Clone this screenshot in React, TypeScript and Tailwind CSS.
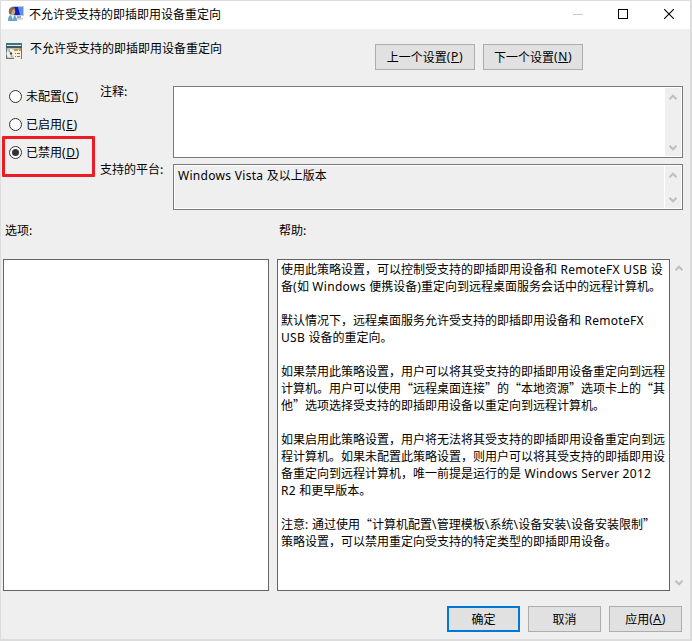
import type { ReactNode } from 'react'
import clsx from 'clsx'

const helpLines = [
  '使用此策略设置，可以控制受支持的即插即用设备和 RemoteFX USB 设',
  '备(如 Windows 便携设备)重定向到远程桌面服务会话中的远程计算机。',
  '',
  '默认情况下，远程桌面服务允许受支持的即插即用设备和 RemoteFX',
  'USB 设备的重定向。',
  '',
  '如果禁用此策略设置，用户可以将其受支持的即插即用设备重定向到远程',
  '计算机。用户可以使用“远程桌面连接”的“本地资源”选项卡上的“其',
  '他”选项选择受支持的即插即用设备以重定向到远程计算机。',
  '',
  '如果启用此策略设置，用户将无法将其受支持的即插即用设备重定向到远',
  '程计算机。如果未配置此策略设置，则用户可以将其受支持的即插即用设',
  '备重定向到远程计算机，唯一前提是运行的是 Windows Server 2012',
  'R2 和更早版本。',
  '',
  '注意: 通过使用“计算机配置\\管理模板\\系统\\设备安装\\设备安装限制”',
  '策略设置，可以禁用重定向受支持的特定类型的即插即用设备。',
]

const options = [
  { label: '未配置', accessKey: 'C', checked: false },
  { label: '已启用', accessKey: 'E', checked: false },
  { label: '已禁用', accessKey: 'D', checked: true },
]

// Latin runs use their own face, everything else (quotes included) stays in the CJK one
function MixedText({ text }: { text: string }) {
  return (
    <>
      {text.split(/([ -~]+)/).map((part, i) =>
        i % 2 === 1 ? (
          <span key={i} className="font-['Noto_Sans','Noto_Sans_CJK_SC',sans-serif] tracking-[0.3px]">{part}</span>
        ) : (
          part
        )
      )}
    </>
  )
}

function KeyLabel({ label, accessKey }: { label: string; accessKey: string }) {
  return (
    <>
      {label}
      <span className="font-['Noto_Sans',sans-serif] tracking-[0.6px]">
        (<span className="inline-block h-[15px] border-b border-black leading-[17px]">{accessKey}</span>)
      </span>
    </>
  )
}

function Button({ className, children }: { className: string; children: ReactNode }) {
  return (
    <button className={clsx('flex h-[26px] items-center justify-center bg-[#e1e1e1] pb-[2px]', className)}>
      {children}
    </button>
  )
}

function Chevron({ down = false }: { down?: boolean }) {
  return (
    <svg className={clsx('h-[7px] w-[8px] shrink-0', down && 'rotate-180')} viewBox="0 0 8 7" fill="none" stroke="#bfbfbf" strokeWidth="2">
      <path d="M.5 5.2 4 1.700l3.500 3.500" />
    </svg>
  )
}

function UserMonitorIcon() {
  return (
    <svg className="h-4 w-4 shrink-0" viewBox="0 0 16 16">
      <path d="M4 0h12v10H4z" fill="#c3c8d2" />
      <path d="M5 1h10v8H5z" fill="#0c1fc0" />
      <path d="M10 1h5v8h-3z" fill="#5f8cf0" />
      <path d="M9 10h4v2H9z" fill="#a3abb8" />
      <path d="M8 12h7v1.500H8z" fill="#c5cad2" />
      <path d="M0 15c0-4 1-6 4-6s5 2 5 6z" fill="#6ba0cc" />
      <path d="M3 9h3l-1 5z" fill="#eef4f9" />
      <ellipse cx="4.500" cy="5.500" rx="2.700" ry="3.800" fill="#cfa27c" />
      <path d="M1.200 8C.2 4 1.500 1 4.500 1c2 0 3 1.200 2.700 2.700-2-.5-3 .2-3.300 1.500L3 8.500z" fill="#7a6a5c" />
    </svg>
  )
}

function PolicyIcon() {
  return (
    <svg className="h-4 w-4 shrink-0" viewBox="0 0 16 16" shapeRendering="crispEdges">
      <path d="M0 0h16v16H0z" fill="#6f7478" />
      <path d="M0 0h16v2H0z" fill="#2e7b85" />
      <path d="M1 2h14v1H1z" fill="#e8ecec" />
      <path d="M0 3h16v2H0z" fill="#4b5560" />
      <path d="M1 5h14v10H1z" fill="#b9bcbc" />
      <g shapeRendering="auto">
        <circle cx="5" cy="10.500" r="4.500" fill="#f0f1ee" />
        <path d="M5 10.500 1.500 8l2-2zM5 10.500l2.500 3.500-3 1z" fill="#a9bd9c" />
        <circle cx="5" cy="10.500" r="1.200" fill="#4c4c4c" />
      </g>
      <path d="M8 7h7v9H8z" fill="#f6efda" />
      <path d="M8 6h4v2H8zM13 5h2v3h-2z" fill="#c79a4a" />
      <path d="M9 10h1v1H9zM11 10h3v1h-3zM9 13h1v1H9zM11 13h3v1h-3z" fill="#777" />
    </svg>
  )
}

export default function App() {
  return (
    <div className="flex h-[641px] w-[692px] flex-col overflow-hidden border-2 border-t-1 border-l-1 border-[#dcdcdc] bg-[#efefef] font-['Noto_Sans_CJK_SC',sans-serif] text-[12px] leading-[17px] text-black">
      {/* Title bar */}
      <header className="flex h-7 shrink-0 items-center bg-white pr-4 pb-[2px] pl-[7px]">
        <UserMonitorIcon />
        <span className="mb-[2px] ml-[5px]">不允许受支持的即插即用设备重定向</span>
        <div className="ml-auto flex items-center gap-9">
          <span className="-mr-px h-px w-[10px] bg-[#c8c8c8]" />
          <span className="h-[10px] w-[10px] border border-black" />
          <svg className="h-[10px] w-[10px]" viewBox="0 0 10 10" stroke="#000" strokeWidth="1.1">
            <path d="m0 0 10 10M10 0 0 10" />
          </svg>
        </div>
      </header>

      {/* Policy name and navigation */}
      <div className="flex h-[57px] shrink-0 items-start pl-[5px]">
        <div className="mt-[14px]">
          <PolicyIcon />
        </div>
        <span className="mt-[10px] ml-2">不允许受支持的即插即用设备重定向</span>
        <div className="mt-[15px] mr-[107px] ml-auto flex gap-2">
          <Button className="w-[100px] border border-[#adadad]">
            <KeyLabel label="上一个设置" accessKey="P" />
          </Button>
          <Button className="w-[100px] border border-[#adadad]">
            <KeyLabel label="下一个设置" accessKey="N" />
          </Button>
        </div>
      </div>

      {/* State and comment */}
      <div className="flex h-[124px] shrink-0">
        <div className="relative w-[98px] shrink-0 pt-px pl-[8px]">
          {options.map((option) => (
            <label key={option.accessKey} className="flex h-7 items-start">
              <span className="mt-[3px] mr-1 flex h-[13px] w-[13px] items-center justify-center rounded-full border border-[#333] bg-white">
                {option.checked && <span className="h-[7px] w-[7px] rounded-full bg-[#333]" />}
              </span>
              <span>
                <KeyLabel label={option.label} accessKey={option.accessKey} />
              </span>
            </label>
          ))}
          <div className="absolute top-[50px] left-[1px] h-[41px] w-[93px] rounded-[1px] border-3 border-[#ed1c24]" />
        </div>
        <div className="w-[74px] shrink-0 pl-[1px]">
          <div className="mt-[-4px] h-[78px]">注释:</div>
          <div>支持的平台:</div>
        </div>
        <div className="flex w-[510px] flex-col gap-[6px]">
          <div className="flex h-[72px] justify-end border border-[#7a7a7a] bg-white p-px">
            <div className="flex w-4 flex-col items-center justify-between bg-[#efefef] pt-[6px] pb-[5px]">
              <Chevron />
              <Chevron down />
            </div>
          </div>
          <div className="flex h-[46px] justify-between border border-[#7a7a7a] bg-white p-px">
            <div className="mr-px grow bg-[#efefef] pl-[3px]">
              <MixedText text="Windows Vista 及以上版本" />
            </div>
            <div className="flex w-4 flex-col items-center justify-between bg-[#efefef] pt-[6px] pb-[5px]">
              <Chevron />
              <Chevron down />
            </div>
          </div>
        </div>
      </div>

      {/* Pane captions */}
      <div className="flex h-[49px] shrink-0 pt-[11px] pl-1">
        <span className="w-[274px]">选项:</span>
        <span>帮助:</span>
      </div>

      {/* Options and help panes */}
      <div className="flex h-[332px] shrink-0 pl-[2px]">
        <div className="w-[266px] border border-[#646464] bg-white" />
        <div className="ml-2 w-[393px] border border-[#646464] bg-white pl-[3px]">
          {helpLines.map((line, i) => (
            <div key={i} className="h-[17px] whitespace-pre">
              <MixedText text={line} />
            </div>
          ))}
        </div>
        <div className="ml-px flex w-4 flex-col items-center justify-between pt-[6px] pb-[5px]">
          <Chevron />
          <Chevron down />
        </div>
      </div>

      {/* Dialog buttons */}
      <footer className="mt-[15px] mr-[8px] flex justify-end gap-2">
        <Button className="w-[73px] border-2 border-[#0078d7]">确定</Button>
        <Button className="w-[73px] border border-[#adadad]">取消</Button>
        <Button className="w-[73px] border border-[#adadad]">
          <KeyLabel label="应用" accessKey="A" />
        </Button>
      </footer>
    </div>
  )
}
